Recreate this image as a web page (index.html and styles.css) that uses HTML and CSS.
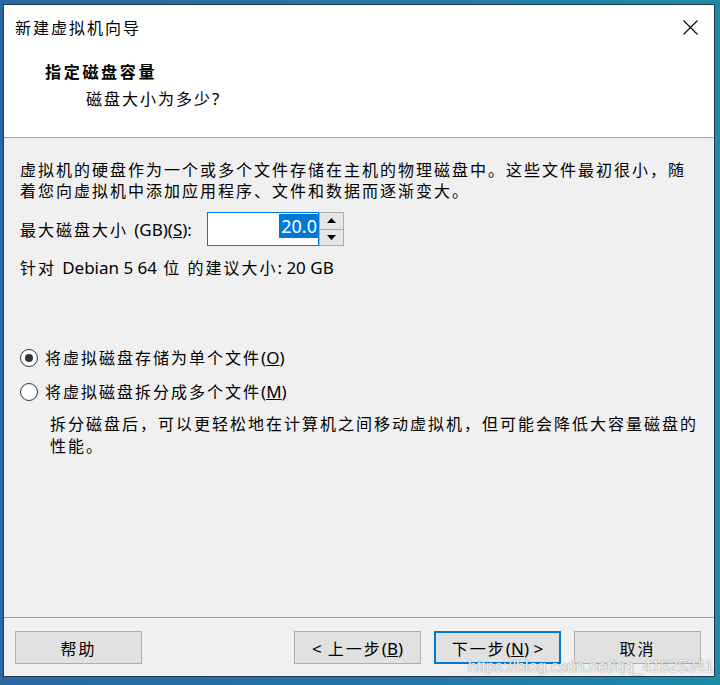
FILE: index.html
```html
<!DOCTYPE html>
<html lang="zh-CN">
<head>
<meta charset="utf-8">
<title>新建虚拟机向导</title>
<link rel="stylesheet" href="styles.css">
</head>
<body>
<div class="window">
  <div class="header">
    <div class="titlebar">
      <span class="title">新建虚拟机向导</span>
      <svg class="close" width="15" height="15" viewBox="0 0 15 15"><path d="M0.5 0.5L14.5 14.5M14.5 0.5L0.5 14.5" stroke="#000" stroke-width="1.1" fill="none"/></svg>
    </div>
    <div class="heading">指定磁盘容量</div>
    <div class="subheading">磁盘大小为多少<span class="lat">?</span></div>
  </div>
  <div class="content">
    <p class="intro">虚拟机的硬盘作为一个或多个文件存储在主机的物理磁盘中。这些文件最初很小，随<br>着您向虚拟机中添加应用程序、文件和数据而逐渐变大。</p>
    <div class="size-row">
      <span class="size-label">最大磁盘大小 <span class="lat">(GB)(<u>S</u>):</span></span>
      <div class="spin">
        <div class="spin-input"><span class="sel">20.0</span></div>
        <div class="spin-btns">
          <div class="spin-btn"><svg width="9" height="5" viewBox="0 0 9 5"><path d="M4.5 0L9 5H0z" fill="#000"/></svg></div>
          <div class="spin-btn"><svg width="9" height="5" viewBox="0 0 9 5"><path d="M0 0H9L4.5 5z" fill="#000"/></svg></div>
        </div>
      </div>
    </div>
    <div class="recommend">针对 <span class="lat">Debian 5 64</span> 位 的建议大小<span class="lat">: 20 GB</span></div>
    <div class="radio-row first"><span class="radio checked"></span>将虚拟磁盘存储为单个文件<span class="lat">(<u>O</u>)</span></div>
    <div class="radio-row second"><span class="radio"></span>将虚拟磁盘拆分成多个文件<span class="lat">(<u>M</u>)</span></div>
    <p class="desc">拆分磁盘后，可以更轻松地在计算机之间移动虚拟机，但可能会降低大容量磁盘的<br>性能。</p>
  </div>
  <div class="footer">
    <button class="btn">帮助</button>
    <div class="nav">
      <button class="btn"><span class="lat">&lt;</span> 上一步<span class="lat">(<u>B</u>)</span></button>
      <button class="btn default">下一步<span class="lat">(<u>N</u>) &gt;</span></button>
      <button class="btn">取消</button>
    </div>
  </div>
  <div class="watermark">https://blog.csdn.net/qq_41625341</div>
</div>
</body>
</html>
```
FILE: styles.css
```css
* { box-sizing: border-box; }
html, body { margin: 0; }
body {
  width: 720px;
  height: 685px;
  overflow: hidden;
  padding: 4px 5px 8px 3px;
  background: linear-gradient(90deg, #2b68a1 0%, #2672a7 45%, #1b8ba6 100%);
  font-family: "Noto Sans", "Noto Sans CJK SC", sans-serif;
  font-size: 16px;
  letter-spacing: 2px;
  color: #000;
}
.lat { letter-spacing: 0; font-size: 17px; }
.window {
  position: relative;
  width: 712px;
  height: 673px;
  border: 1px solid #1e3b50;
  background: #f0f0f0;
  display: flex;
  flex-direction: column;
}
.header {
  height: 133px;
  background: #fff;
  border-bottom: 1px solid #a0a0a0;
}
.titlebar {
  height: 44px;
  display: flex;
  align-items: center;
  justify-content: space-between;
  padding: 0 16px 0 11px;
}
.title {
  font-family: "Noto Sans CJK SC", sans-serif;
  font-size: 16px;
  letter-spacing: 2px;
}
.close { display: block; }
.heading {
  margin-top: 12px;
  padding-left: 41px;
  line-height: 22px;
  font-weight: bold;
  letter-spacing: 2.7px;
}
.subheading {
  margin-top: 5px;
  padding-left: 82px;
  line-height: 22px;
}
.content {
  flex: 1;
  padding-left: 16px;
  border-bottom: 1px solid #a0a0a0;
  white-space: nowrap;
}
.intro {
  margin: 22px 0 0;
  line-height: 21px;
}
.size-row {
  margin-top: 10px;
  height: 34px;
  display: flex;
  align-items: center;
}
.size-label { width: 187px; }
.spin { display: flex; height: 34px; }
.spin-input {
  width: 112px;
  height: 34px;
  background: #fff;
  border: 1px solid #0078d7;
  display: flex;
  justify-content: flex-end;
  align-items: flex-start;
  padding-top: 1px;
}
.sel {
  background: #0078d7;
  color: #fff;
  font-size: 18px;
  line-height: 24px;
  letter-spacing: 0;
  padding: 0 1px 0 2px;
}
.spin-btns {
  width: 25px;
  display: flex;
  flex-direction: column;
}
.spin-btn {
  flex: 1;
  background: #e6e6e6;
  border: 1px solid #adadad;
  display: flex;
  align-items: center;
  justify-content: center;
}
.spin-btn + .spin-btn { margin-top: -1px; }
.spin-btn svg { display: block; }
.recommend {
  margin-top: 11px;
  line-height: 21px;
}
.radio-row {
  line-height: 22px;
  display: flex;
  align-items: center;
}
.radio-row.first { margin-top: 68px; }
.radio-row.second { margin-top: 12px; }
.radio {
  width: 18px;
  height: 18px;
  margin: 0 7px 0 0;
  border: 1px solid #333;
  border-radius: 50%;
  background: #fff;
  display: flex;
  align-items: center;
  justify-content: center;
}
.radio.checked::after {
  content: "";
  width: 8px;
  height: 8px;
  border-radius: 50%;
  background: #333;
}
.desc {
  margin: 10px 0 0;
  padding-left: 30px;
  line-height: 22px;
}
.footer {
  height: 58px;
  padding: 13px 13px 0 11px;
  display: flex;
  justify-content: space-between;
  align-items: flex-start;
}
.nav { display: flex; gap: 13px; }
.btn {
  width: 127px;
  height: 33px;
  margin: 0;
  padding: 0;
  background: #e1e1e1;
  border: 1px solid #adadad;
  font-family: inherit;
  font-size: 16px;
  letter-spacing: 2px;
  color: #000;
}
.btn.default { border: 2px solid #0078d7; }
.watermark {
  position: absolute;
  left: 464px;
  top: 652px;
  font-family: "Liberation Sans", Arial, sans-serif;
  font-size: 16px;
  line-height: 20px;
  letter-spacing: 0;
  color: rgba(255, 255, 255, 0.9);
  text-shadow: 0 0 1px rgba(90, 90, 90, 0.7), 0 0 2px rgba(120, 120, 120, 0.35);
  white-space: nowrap;
}
```
